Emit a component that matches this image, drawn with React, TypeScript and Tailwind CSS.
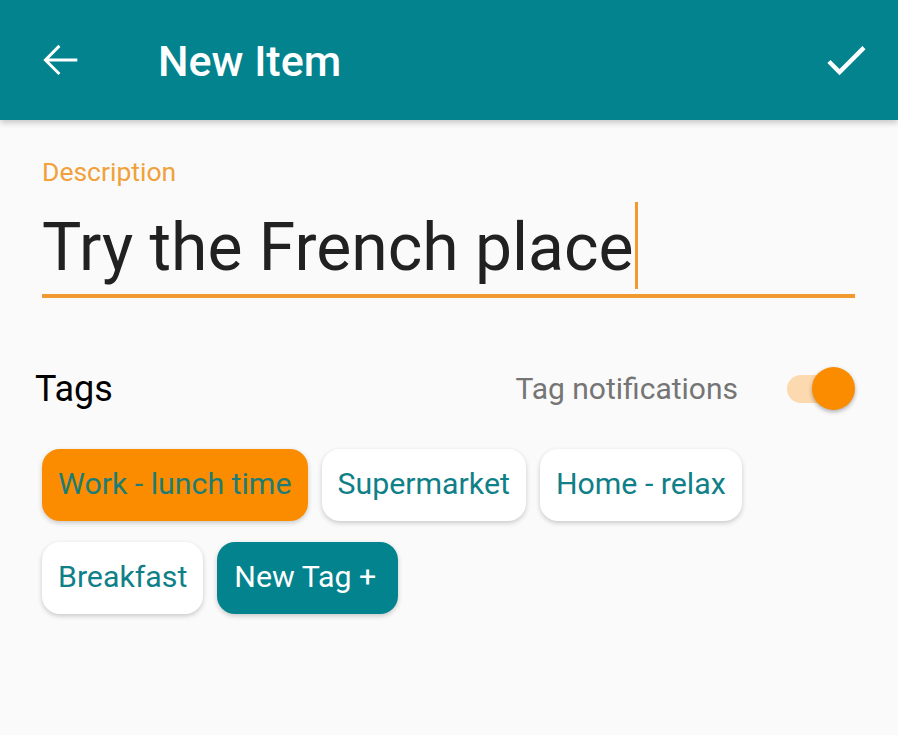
import React from 'react';

const tags = [
  { label: 'Work - lunch time', selected: true },
  { label: 'Supermarket', selected: false },
  { label: 'Home - relax', selected: false },
  { label: 'Breakfast', selected: false },
];

const BackIcon = () => (
  <svg viewBox="0 0 24 24" className="h-[52px] w-[52px]" fill="white">
    <path d="M20 11.25H6.9l5.3-5.3-.95-.95L4.3 12l6.95 6.95.95-.95-5.3-5.3H20v-1.5z" />
  </svg>
);

const CheckIcon = () => (
  <svg viewBox="0 0 24 24" className="h-[52px] w-[52px]" fill="white">
    <path d="M9 16.17L4.83 12l-1.42 1.41L9 19 21 7l-1.41-1.41z" />
  </svg>
);

const App: React.FC = () => {
  return (
    <div className="min-h-screen bg-[#fafafa] font-['Roboto',sans-serif]">
      {/* App bar */}
      <div className="flex h-[120px] items-center bg-[#02838e] pl-[34px] pr-[26px] shadow-[0_3px_6px_rgba(0,0,0,0.2)]">
        <BackIcon />
        <h1 className="ml-[72px] flex-1 pt-[2px] text-[43px] font-medium leading-none text-white">New Item</h1>
        <CheckIcon />
      </div>

      <div className="pl-[42px] pr-[43px]">
        {/* Description field */}
        <label className="mt-[39px] block text-[26.5px] leading-none text-[#f0a13a]">Description</label>
        <div className="mt-[16px] flex items-center">
          <span className="pt-[6px] text-[66px] leading-none text-[#212121]">Try the French place</span>
          <span className="ml-[1px] h-[87px] w-[3px] bg-[#f29a2e]" />
        </div>
        <div className="mt-[5px] h-[4px] bg-[#f29a2e]" />

        {/* Tags header */}
        <div className="mt-[69px] flex h-[44px] items-center">
          <span className="-ml-[7px] flex-1 text-[36px] leading-none text-black">Tags</span>
          <span className="text-[30px] leading-none text-[#757575]">Tag notifications</span>
          <div className="relative ml-[49px] h-[43px] w-[68px]">
            <div className="absolute left-0 top-[8px] h-[28px] w-[58px] rounded-full bg-[#fdd9b0]" />
            <div className="absolute right-0 top-0 h-[43px] w-[43px] rounded-full bg-[#fb8c00] shadow-[0_2px_4px_rgba(0,0,0,0.3)]" />
          </div>
        </div>

        {/* Tag chips */}
        <div className="mt-[38px] flex flex-wrap gap-x-[14px] gap-y-[21px]">
          {tags.map((tag) => (
            <button
              key={tag.label}
              className={`flex h-[72px] items-center rounded-[18px] px-[16px] text-[30.3px] leading-none shadow-[0_2px_5px_rgba(0,0,0,0.2)] ${
                tag.selected ? 'bg-[#fb8c00] text-[#1d7d74]' : 'bg-white text-[#0f8088]'
              }`}
            >
              {tag.label}
            </button>
          ))}
          <button className="flex h-[72px] items-center rounded-[18px] bg-[#02838e] pl-[17px] pr-[22px] text-[30.3px] leading-none text-white shadow-[0_2px_5px_rgba(0,0,0,0.2)]">
            New Tag +
          </button>
        </div>
      </div>
    </div>
  );
};

export default App;
